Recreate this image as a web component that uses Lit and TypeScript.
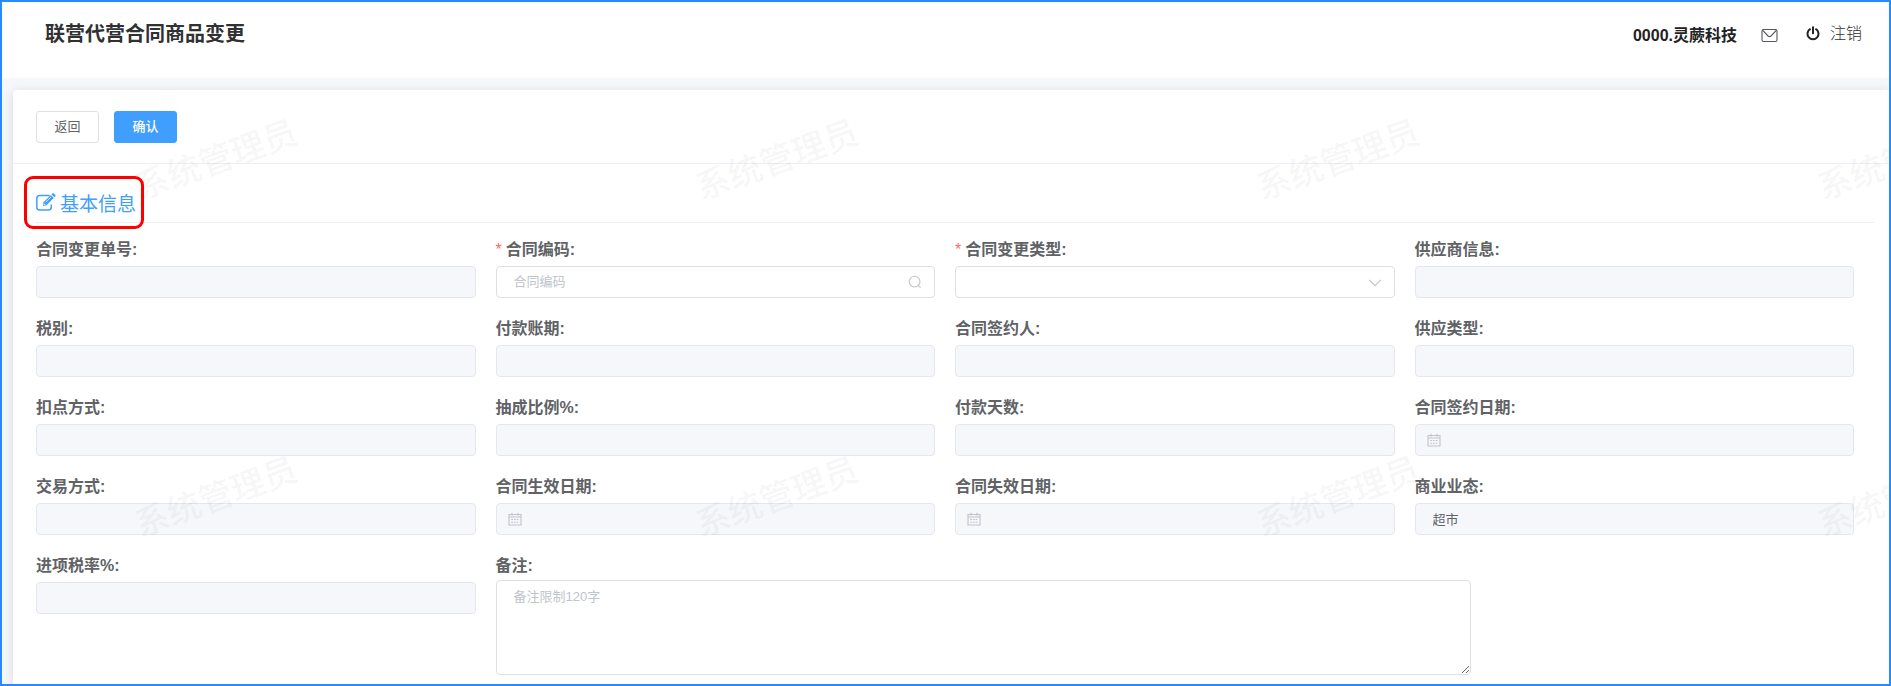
import { LitElement, html, css, nothing } from "lit";
import { customElement, property } from "lit/decorators.js";
import { classMap } from "lit/directives/class-map.js";

type Kind = "text" | "search" | "select" | "date" | "textarea";

interface Field {
  id: string;
  label: string;
  kind?: Kind;
  required?: boolean;
  editable?: boolean;
  value?: string;
  placeholder?: string;
}

const FIELDS: Field[] = [
  { id: "changeNo", label: "合同变更单号" },
  { id: "contractCode", label: "合同编码", kind: "search", required: true, editable: true, placeholder: "合同编码" },
  { id: "changeType", label: "合同变更类型", kind: "select", required: true, editable: true },
  { id: "supplier", label: "供应商信息" },
  { id: "tax", label: "税别" },
  { id: "payTerm", label: "付款账期" },
  { id: "signer", label: "合同签约人" },
  { id: "supplyType", label: "供应类型" },
  { id: "deductMode", label: "扣点方式" },
  { id: "commission", label: "抽成比例%" },
  { id: "payDays", label: "付款天数" },
  { id: "signDate", label: "合同签约日期", kind: "date" },
  { id: "tradeMode", label: "交易方式" },
  { id: "startDate", label: "合同生效日期", kind: "date" },
  { id: "endDate", label: "合同失效日期", kind: "date" },
  { id: "format", label: "商业业态", value: "超市" },
  { id: "inputTax", label: "进项税率%" },
  { id: "remark", label: "备注", kind: "textarea", editable: true, placeholder: "备注限制120字" },
];

const searchIcon = html`<svg class="icon search" viewBox="0 0 14 14" aria-hidden="true">
  <circle cx="6.6" cy="6.6" r="5.4" /><path d="M10.4 10.6 12.6 12.6" />
</svg>`;

const arrowIcon = html`<svg class="icon arrow" viewBox="0 0 14 14" aria-hidden="true">
  <path d="M1.2 4.8 7 10.600l5.8-5.8" />
</svg>`;

const dateIcon = html`<svg class="icon date" viewBox="0 0 14 14" aria-hidden="true">
  <path d="M1 2.5h12v10.500H1zM1 5h12M4 .8v3M10 .8v3" />
  <path class="dots" d="M3.200 7.500h7.600M3.200 10.200h7.600" />
</svg>`;

@customElement("form-field")
class FormField extends LitElement {
  @property({ attribute: false }) field!: Field;

  static styles = css`
    :host {
      display: block;
      min-width: 0;
    }
    .label {
      display: block;
      height: 26px;
      margin-bottom: 3px;
      line-height: 26px;
      font-size: 16px;
      font-weight: 700;
      color: #606266;
      white-space: nowrap;
    }
    .label.tight {
      margin-bottom: 1px;
    }
    .star {
      margin-right: 4px;
      font-weight: 400;
      color: #f56c6c;
    }
    .box {
      position: relative;
      display: block;
    }
    .control {
      display: block;
      box-sizing: border-box;
      width: 100%;
      height: 32px;
      margin: 0;
      padding: 0 17px 2px;
      border: 1px solid #dcdfe6;
      border-radius: 4px;
      background: #fff;
      color: #606266;
      font-family: inherit;
      font-size: 13px;
      outline: none;
      appearance: none;
    }
    .control:disabled {
      background: #f5f7fa;
      border-color: #e4e7ed;
      opacity: 1;
    }
    .control::placeholder {
      color: #c0c4cc;
      opacity: 1;
    }
    .area {
      height: 95px;
      padding: 6px 17px;
      line-height: 20px;
      resize: vertical;
    }
    .icon {
      position: absolute;
      top: 9px;
      width: 14px;
      height: 14px;
      fill: none;
      stroke: #c0c4cc;
      stroke-width: 1.1;
      pointer-events: none;
    }
    .search,
    .arrow {
      right: 13px;
    }
    .date {
      left: 12px;
    }
    .dots {
      stroke-dasharray: 1.8 0.9;
    }
  `;

  private control(f: Field) {
    const off = !f.editable;
    switch (f.kind) {
      case "textarea":
        return html`<textarea id=${f.id} class="control area" placeholder=${f.placeholder ?? ""}></textarea>`;
      case "select":
        return html`<select id=${f.id} class="control" ?disabled=${off}><option value=""></option></select>${arrowIcon}`;
      default:
        return html`<input
            id=${f.id}
            class="control"
            type="text"
            .value=${f.value ?? ""}
            placeholder=${f.placeholder ?? ""}
            ?disabled=${off}
          />${f.kind === "search" ? searchIcon : f.kind === "date" ? dateIcon : nothing}`;
    }
  }

  render() {
    const f = this.field;
    return html`
      <label class=${classMap({ label: true, tight: f.kind === "textarea" })} for=${f.id}
        >${f.required ? html`<span class="star">*</span>` : nothing}${f.label}:</label
      >
      <div class="box">${this.control(f)}</div>
    `;
  }
}

@customElement("water-mark")
class WaterMark extends LitElement {
  @property() text = "";

  static styles = css`
    :host {
      position: absolute;
      inset: 0;
      overflow: hidden;
      pointer-events: none;
    }
    .mark {
      position: absolute;
      width: 200px;
      line-height: 48px;
      text-align: center;
      font-size: 34px;
      font-weight: 500;
      color: rgba(0, 0, 0, 0.05);
      white-space: nowrap;
      transform: rotate(-20deg);
    }
  `;

  render() {
    const marks = [0, 1].flatMap((row) => [0, 1, 2, 3].map((col) => ({ x: 114 + col * 561, y: 134 + row * 337 })));
    return marks.map((m) => html`<span class="mark" style="left:${m.x}px;top:${m.y}px">${this.text}</span>`);
  }
}

@customElement("app-root")
class AppRoot extends LitElement {
  static styles = css`
    :host {
      display: flex;
      flex-direction: column;
      position: relative;
      box-sizing: border-box;
      min-height: 100vh;
      border: 2px solid #268bff;
      background: #f5f7fa;
      font-family: "Liberation Sans", "Noto Sans CJK SC", sans-serif;
      color: #303133;
    }
    .top {
      display: flex;
      align-items: flex-start;
      justify-content: space-between;
      height: 76px;
      box-sizing: border-box;
      padding: 16px 27px 0 43px;
      background: #fff;
    }
    .title {
      margin: 0;
      font-size: 20px;
      line-height: 32px;
      font-weight: 700;
    }
    .user {
      display: flex;
      align-items: center;
      font-size: 16px;
      line-height: 32px;
    }
    .company {
      margin-right: 24px;
      padding-top: 2px;
      font-weight: 700;
      color: #222;
    }
    .mail,
    .logout {
      display: flex;
      align-items: center;
      padding: 0;
      border: 0;
      background: none;
      font: inherit;
      color: #303133;
      cursor: pointer;
    }
    .mail {
      margin-right: 28px;
    }
    .mail svg {
      width: 17px;
      height: 16px;
      fill: none;
      stroke: #55575c;
      stroke-width: 1.1;
    }
    .logout {
      gap: 10px;
      padding-bottom: 2px;
      font-weight: 300;
    }
    .logout svg {
      width: 14px;
      height: 16px;
      fill: none;
      stroke: #222;
      stroke-width: 2;
      stroke-linecap: round;
    }
    .body {
      display: flex;
      flex: 1;
      padding: 12px 0 0 11px;
      overflow: hidden;
    }
    .card {
      flex: 1;
      min-width: 0;
      border-top-left-radius: 4px;
      background: #fff;
      box-shadow: 0 2px 12px rgba(0, 0, 0, 0.12);
    }
    .bar {
      display: flex;
      gap: 15px;
      padding: 21px 23px 20px;
      border-bottom: 1px solid #ebeef5;
    }
    .btn {
      box-sizing: border-box;
      width: 63px;
      height: 32px;
      padding: 0 0 3px;
      border: 1px solid #dcdfe6;
      border-radius: 3px;
      background: #fff;
      color: #606266;
      font-family: inherit;
      font-size: 13px;
      cursor: pointer;
    }
    .primary {
      border-color: #409eff;
      background: #409eff;
      color: #fff;
      font-weight: 500;
    }
    .section {
      position: relative;
      display: flex;
      align-items: center;
      gap: 4px;
      box-sizing: border-box;
      height: 39px;
      margin: 20px 15px 0 23px;
      padding-bottom: 2px;
      border-bottom: 1px solid #ebeef5;
      font-size: 19px;
      font-weight: 400;
      color: #409eff;
    }
    .section svg {
      width: 20px;
      height: 20px;
      fill: none;
      stroke: #409eff;
    }
    .callout {
      position: absolute;
      left: -12px;
      top: -8px;
      box-sizing: border-box;
      width: 120px;
      height: 53px;
      border: 3px solid #fe0000;
      border-radius: 9px;
      pointer-events: none;
    }
    .form {
      display: grid;
      grid-template-columns: repeat(24, minmax(0, 1fr));
      gap: 18px 20px;
      padding: 14px 35px 9px 23px;
    }
    .cell {
      grid-column: span 6;
    }
    .wide {
      grid-column: span 13;
    }
  `;

  render() {
    return html`
      <header class="top">
        <h1 class="title">联营代营合同商品变更</h1>
        <div class="user">
          <span class="company">0000.灵蕨科技</span>
          <button class="mail" aria-label="消息">
            <svg viewBox="0 0 17 16">
              <rect x="1" y="2.500" width="15" height="12" rx="1.500" />
              <path d="M1.500 3.200 7 9q1.500 1.300 3 0l5.500-5.800" />
            </svg>
          </button>
          <button class="logout">
            <svg viewBox="0 0 14 16"><path d="M4 3.200a5.500 5.500 0 1 0 6 0M7 1.300v6" /></svg>
            注销
          </button>
        </div>
      </header>
      <main class="body">
        <div class="card">
          <div class="bar">
            <button class="btn">返回</button>
            <button class="btn primary">确认</button>
          </div>
          <h2 class="section">
            <svg viewBox="0 0 20 20" aria-hidden="true">
              <path
                stroke-width="1.500"
                d="M13.500 3.800Q12.800 3.500 12 3.500H3.800Q.8 3.500.8 6.500v8.500q0 3 3 3h8.500q3 0 3-3V12.500"
              />
              <path
                fill="#409eff"
                stroke="none"
                d="M7 10.700 14.800 3l3 3-7.800 7.700H7zM15.500 2.300l.9-.9q.7-.6 1.400 0l1.500 1.500q.7.700 0 1.400l-.9.900z"
              />
              <path stroke="#fff" stroke-width=".8" d="M9.800 10 15 4.900M8 11.300v1.500h1.500" />
            </svg>
            基本信息
            <span class="callout"></span>
          </h2>
          <form class="form">
            ${FIELDS.map(
              (f) => html`<form-field
                class=${classMap({ cell: true, wide: f.kind === "textarea" })}
                .field=${f}
              ></form-field>`
            )}
          </form>
        </div>
      </main>
      <water-mark text="系统管理员"></water-mark>
    `;
  }
}
